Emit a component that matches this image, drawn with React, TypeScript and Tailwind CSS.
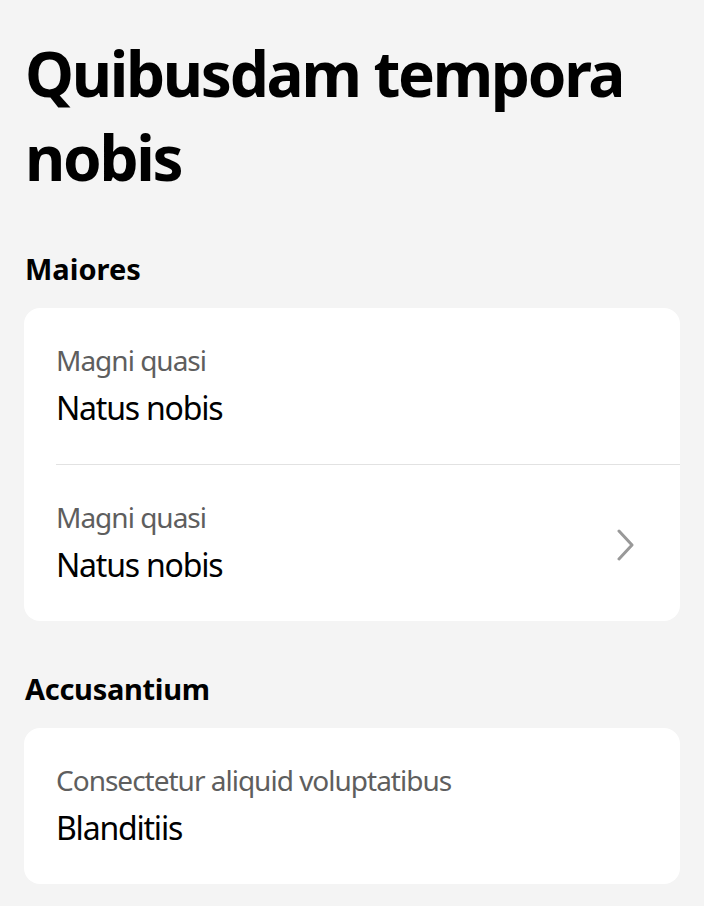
const font = { fontFamily: '"Noto Sans", "Open Sans", sans-serif' };

function Row({ label, value, chevron, divider }: { label: string; value: string; chevron?: boolean; divider?: boolean }) {
  return (
    <div className="relative">
      <div className="flex items-center pl-8 pr-[46px] pt-8 pb-[34px]">
        <div className="flex-1 flex flex-col gap-[6px]">
          <span className="text-[28px] leading-[40px] tracking-[-1px] text-[#5e5e5e]">{label}</span>
          <span className="text-[32px] leading-[44px] tracking-[-1.2px] text-black">{value}</span>
        </div>
        {chevron && (
          <svg width="18" height="32" viewBox="0 0 18 32" fill="none" className="mt-[6px]">
            <polyline points="3,2 16,16 3,30" stroke="#999999" strokeWidth="3" strokeLinecap="round" strokeLinejoin="round" />
          </svg>
        )}
      </div>
      {divider && <div className="ml-8 h-px bg-[#e2e2e2]" />}
    </div>
  );
}

function Section({ title, className, children }: { title: string; className: string; children: React.ReactNode }) {
  return (
    <section className={className}>
      <h2 className="text-[29px] leading-[40px] font-bold text-black mb-[19px] pl-px">{title}</h2>
      <div className="bg-white rounded-2xl overflow-hidden">{children}</div>
    </section>
  );
}

export default function App() {
  return (
    <div className="min-h-[906px] bg-[#f4f4f4] px-6 pt-[31px] pb-6" style={font}>
      <h1 className="text-[62px] leading-[84px] font-bold tracking-[-2.3px] text-black pl-px">
        Quibusdam tempora nobis
      </h1>
      <Section title="Maiores" className="mt-[50px]">
        <Row label="Magni quasi" value="Natus nobis" divider />
        <Row label="Magni quasi" value="Natus nobis" chevron />
      </Section>
      <Section title="Accusantium" className="mt-[48px] tracking-[-0.3px]">
        <Row label="Consectetur aliquid voluptatibus" value="Blanditiis" />
      </Section>
    </div>
  );
}
